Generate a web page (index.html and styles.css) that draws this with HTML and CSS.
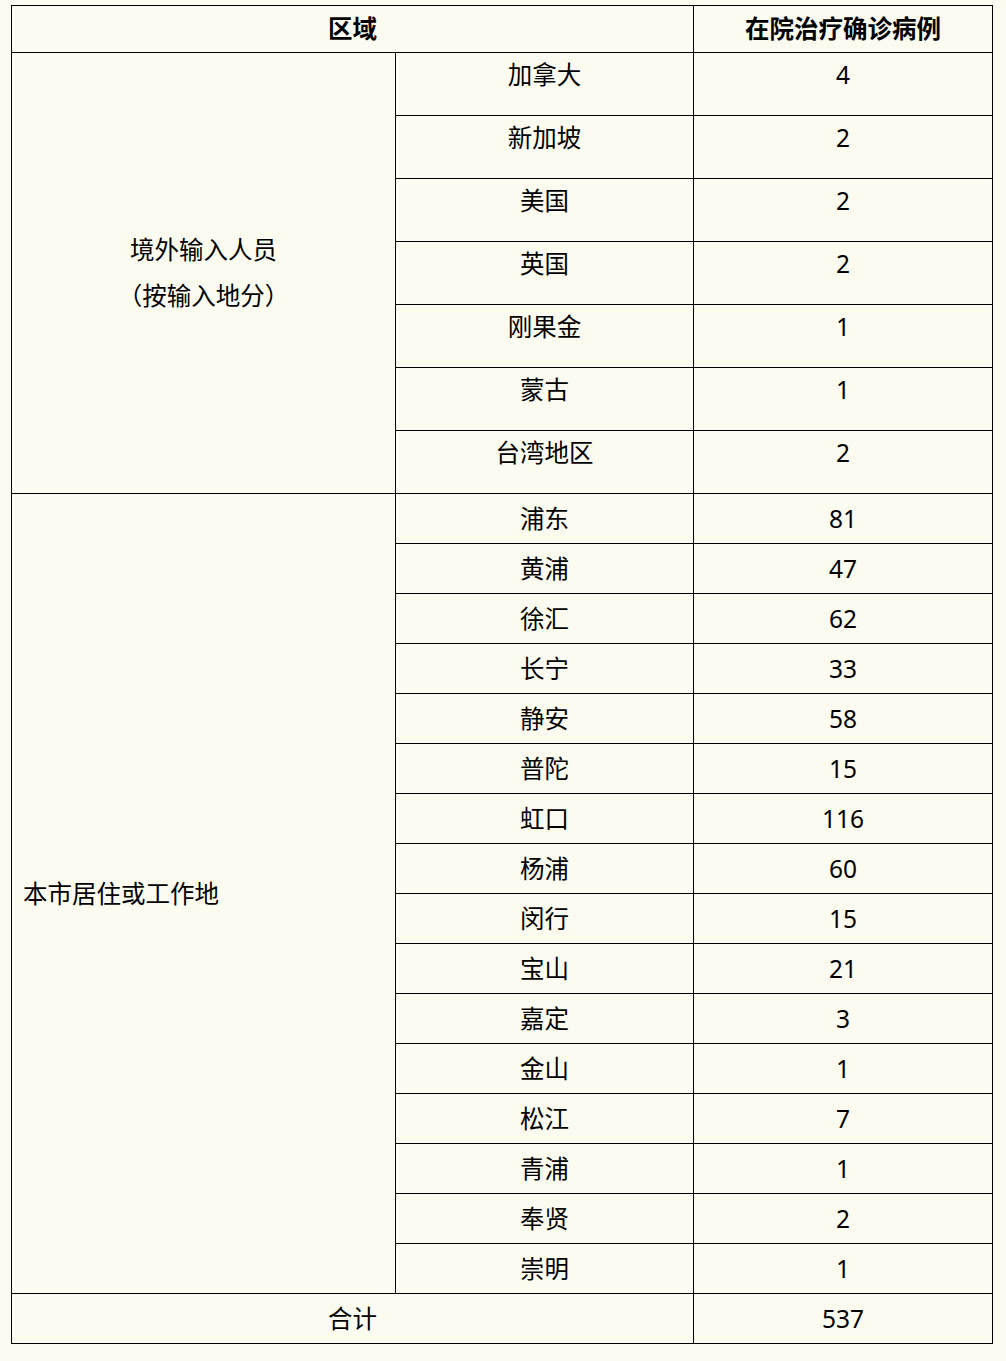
FILE: index.html
```html
<!DOCTYPE html>
<html lang="zh-CN">
<head>
<meta charset="utf-8">
<title>在院治疗确诊病例</title>
<link rel="stylesheet" href="styles.css">
</head>
<body>
<table class="cases">
  <colgroup>
    <col class="c1">
    <col class="c2">
    <col class="c3">
  </colgroup>
  <thead>
    <tr class="head">
      <th colspan="2">区域</th>
      <th>在院治疗确诊病例</th>
    </tr>
  </thead>
  <tbody>
    <tr class="abroad">
      <td rowspan="7" class="group center">境外输入人员<br>（按输入地分）</td>
      <td>加拿大</td><td>4</td>
    </tr>
    <tr class="abroad"><td>新加坡</td><td>2</td></tr>
    <tr class="abroad"><td>美国</td><td>2</td></tr>
    <tr class="abroad"><td>英国</td><td>2</td></tr>
    <tr class="abroad"><td>刚果金</td><td>1</td></tr>
    <tr class="abroad"><td>蒙古</td><td>1</td></tr>
    <tr class="abroad"><td>台湾地区</td><td>2</td></tr>
    <tr class="local">
      <td rowspan="16" class="group left">本市居住或工作地</td>
      <td>浦东</td><td>81</td>
    </tr>
    <tr class="local"><td>黄浦</td><td>47</td></tr>
    <tr class="local"><td>徐汇</td><td>62</td></tr>
    <tr class="local"><td>长宁</td><td>33</td></tr>
    <tr class="local"><td>静安</td><td>58</td></tr>
    <tr class="local"><td>普陀</td><td>15</td></tr>
    <tr class="local"><td>虹口</td><td>116</td></tr>
    <tr class="local"><td>杨浦</td><td>60</td></tr>
    <tr class="local"><td>闵行</td><td>15</td></tr>
    <tr class="local"><td>宝山</td><td>21</td></tr>
    <tr class="local"><td>嘉定</td><td>3</td></tr>
    <tr class="local"><td>金山</td><td>1</td></tr>
    <tr class="local"><td>松江</td><td>7</td></tr>
    <tr class="local"><td>青浦</td><td>1</td></tr>
    <tr class="local"><td>奉贤</td><td>2</td></tr>
    <tr class="local"><td>崇明</td><td>1</td></tr>
    <tr class="total">
      <td colspan="2">合计</td><td>537</td>
    </tr>
  </tbody>
</table>
</body>
</html>
```
FILE: styles.css
```css
html, body {
  margin: 0;
  background: #fbfbf0;
}
body {
  padding: 5px 0 0 11px;
  font-family: "Noto Sans", "Noto Sans CJK SC", sans-serif;
  font-size: 24.5px;
  color: #000;
}
.cases {
  border-collapse: collapse;
  table-layout: fixed;
  width: 981px;
}
.c1 { width: 384px; }
.c2 { width: 298px; }
.c3 { width: 299px; }
.cases th, .cases td {
  border: 1px solid #000;
  padding: 0;
  text-align: center;
  line-height: 36px;
  vertical-align: top;
}
.head th {
  font-weight: bold;
  height: 46px;
  vertical-align: middle;
}
.abroad td {
  height: 63px;
  padding-top: 4px;
  box-sizing: border-box;
}
.local td, .total td {
  height: 49px;
  vertical-align: middle;
}
.cases td.group {
  vertical-align: middle;
  padding-top: 0;
}
.group.center {
  line-height: 46px;
}
.group.left {
  text-align: left;
  padding-left: 11px;
}
```
